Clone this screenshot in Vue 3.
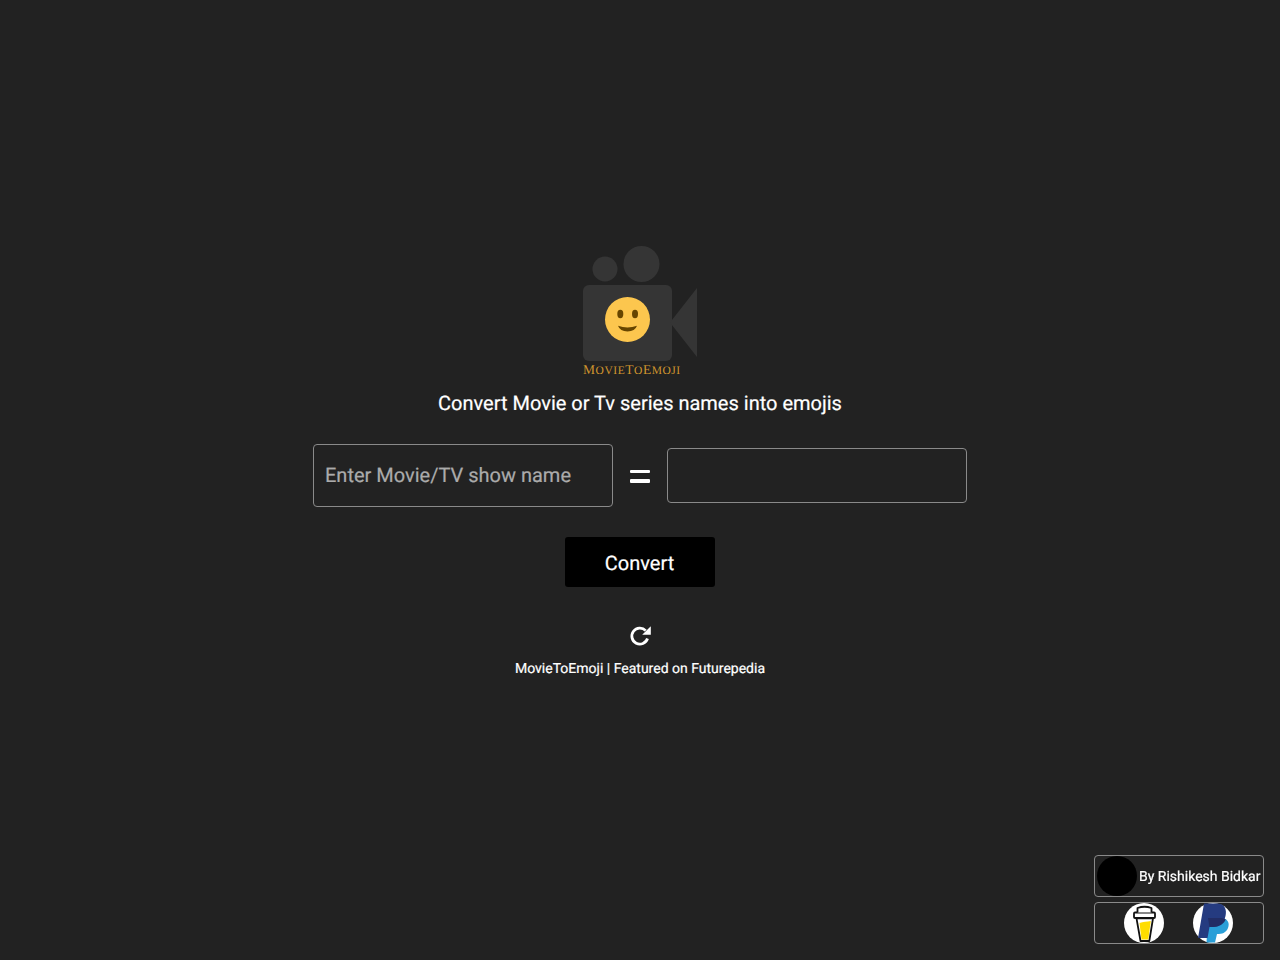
<script setup>
const title = 'Convert Movie or Tv series names into emojis'
</script>

<template>
  <div class="page">
    <main class="main">
      <div class="logo">
        <svg class="logo-art" width="114" height="122" viewBox="0 0 114 122">
          <circle cx="22" cy="23" r="12.500" fill="#353535" />
          <circle cx="58.500" cy="18" r="18" fill="#353535" />
          <rect x="0" y="39" width="89" height="76" rx="6" fill="#353535" />
          <path d="M87 76.500 L114 42 V111 Z" fill="#353535" />
          <circle cx="44.500" cy="73.500" r="22.500" fill="#fcc64e" />
          <ellipse cx="37.300" cy="68" rx="3" ry="4.200" fill="#664500" />
          <ellipse cx="52" cy="68" rx="3" ry="4.200" fill="#664500" />
          <path d="M35 79.800 Q44.500 83.400 54 79.800 Q52 85.400 44.500 85.400 Q37 85.400 35 79.800 Z" fill="#664500" />
        </svg>
        <div class="logo-name"><b>M</b>OVIE<b>T</b>O<b>E</b>MOJI</div>
      </div>
      <p class="tagline">{{ title }}</p>
      <div class="fields">
        <input class="field field-in" type="text" placeholder="Enter Movie/TV show name" />
        <span class="equals" aria-hidden="true"><i></i><i></i></span>
        <div class="field field-out"></div>
      </div>
      <button class="convert" type="button">Convert</button>
      <svg class="refresh" width="24" height="24" viewBox="0 0 24 24">
        <path d="M19.500 14.500 A8 8 0 1 1 17.700 6.600" fill="none" stroke="#fff" stroke-width="2.800" />
        <path d="M14.200 10.800 H22.800 V2.200 Z" fill="#fff" />
      </svg>
      <p class="credit">MovieToEmoji | Featured on Futurepedia</p>
    </main>

    <aside class="corner">
      <div class="corner-box author">
        <span class="avatar"></span>
        <span class="author-name">By Rishikesh Bidkar</span>
      </div>
      <div class="corner-box support">
        <span class="badge">
          <svg width="40" height="40" viewBox="0 0 40 40">
            <circle cx="20" cy="20" r="20" fill="#fff" />
            <path d="M12.500 15.300 H29 L25.300 38 H16.500 Z" fill="#fff" stroke="#111" stroke-width="1.800" stroke-linejoin="round" />
            <path d="M15.500 20 C19 18.500 23 19 26.800 18 L24.300 36.500 H17.500 Z" fill="#fd0" />
            <rect x="10" y="9.500" width="21" height="5.500" rx="1" fill="#fff" stroke="#111" stroke-width="1.800" />
            <path d="M13.500 9.500 V5 Q20.500 2.500 27.500 5 V9.500" fill="#fff" stroke="#111" stroke-width="1.800" stroke-linejoin="round" />
          </svg>
        </span>
        <span class="badge">
          <svg width="40" height="40" viewBox="0 0 40 40">
            <circle cx="20" cy="20" r="20" fill="#fff" />
            <path d="M15 15 H27 C35 15 37 20 35 25 C33 30 29 31 24 31 L22 39.500 H13.500 Z" fill="#2a9fd8" />
            <path d="M11 0.500 H24 C32 0.500 34 7 32.500 13 C31 20 26 24 20 24 H16.500 L14.500 35 H5 Z" fill="#253b80" />
            <path d="M15 15 H27 C29.500 15 31.500 15.500 32.700 16.500 C31 21 26 24 20 24 H16.500 Z" fill="#222d65" />
          </svg>
        </span>
      </div>
    </aside>
  </div>
</template>

<style>
html, body {
  margin: 0;
  background: #222222;
}
</style>

<style scoped>
.page {
  min-height: 960px;
  background: #222222;
  color: #fff;
  font-family: Roboto, "Liberation Sans", sans-serif;
  text-rendering: geometricPrecision;
  -webkit-text-stroke: 0.2px;
}
.main {
  display: flex;
  flex-direction: column;
  align-items: center;
  padding-top: 246px;
}
.logo {
  width: 114px;
  height: 132px;
  display: flex;
  flex-direction: column;
}
.logo-art {
  display: block;
  flex: none;
}
.logo-name {
  font-family: "Liberation Serif", serif;
  font-size: 11.500px;
  line-height: 14px;
  letter-spacing: 0.550px;
  color: #d0952e;
  white-space: nowrap;
  margin-top: -5px;
  -webkit-text-stroke: 0;
}
.logo-name b {
  font-size: 13.500px;
  font-weight: 400;
}
.tagline {
  margin: 13px 0 0;
  font-size: 20px;
  line-height: 24px;
  height: 24px;
}
.fields {
  display: flex;
  align-items: center;
  margin-top: 29px;
}
.field {
  box-sizing: border-box;
  width: 300px;
  border: 1px solid #8a8a8a;
  border-radius: 4px;
  background: transparent;
}
.field-in {
  height: 63px;
  padding: 0 11px 2px;
  font: 20px Roboto, "Liberation Sans", sans-serif;
  color: #fff;
  outline: none;
  text-rendering: geometricPrecision;
}
.field-in::placeholder {
  color: #ababab;
  opacity: 1;
}
.field-out {
  height: 55px;
}
.equals {
  width: 54px;
  display: flex;
  flex-direction: column;
  align-items: center;
  gap: 6px;
  padding-top: 1px;
}
.equals i {
  display: block;
  width: 20px;
  height: 3.500px;
  background: #fff;
  border-radius: 1px;
}
.convert {
  width: 150px;
  height: 50px;
  margin-top: 30px;
  border: 0;
  border-radius: 3px;
  background: #000;
  color: #fff;
  font: 20px Roboto, "Liberation Sans", sans-serif;
  padding: 2px 1px 0 0;
  text-rendering: geometricPrecision;
}
.refresh {
  display: block;
  margin-top: 37px;
}
.credit {
  margin: 13px 0 0;
  font-size: 14px;
  line-height: 16px;
}
.corner {
  position: fixed;
  left: 1094px;
  top: 855px;
  width: 170px;
  display: flex;
  flex-direction: column;
  gap: 5px;
}
.corner-box {
  box-sizing: border-box;
  height: 42px;
  border: 1px solid #8a8a8a;
  border-radius: 4px;
  display: flex;
  align-items: center;
}
.author {
  padding-left: 2px;
  gap: 2px;
}
.avatar {
  width: 40px;
  height: 40px;
  border-radius: 50%;
  background: #000;
  flex: none;
}
.author-name {
  font-size: 14px;
  font-weight: 400;
  white-space: nowrap;
  padding-top: 1px;
}
.support {
  justify-content: center;
  gap: 29px;
  padding-right: 1px;
}
.badge {
  width: 40px;
  height: 40px;
  display: block;
}
.badge svg {
  display: block;
}
</style>
